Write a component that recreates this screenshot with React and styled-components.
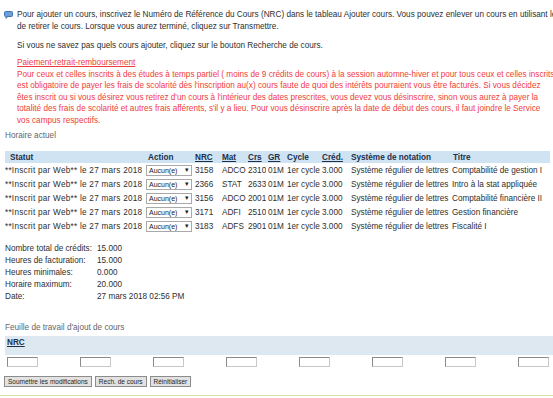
import React from "react";
import styled, { createGlobalStyle } from "styled-components";

const GlobalStyle = createGlobalStyle`
  body {
    margin: 0;
    background: #fff;
    overflow: hidden;
    font-family: "Liberation Sans", Tahoma, sans-serif;
    font-size: 8.2px;
    color: #2e2e2e;
  }
`;

const Page = styled.div`
  width: 760px;
  padding-top: 9px;
`;

const Intro = styled.div`
  display: flex;
  padding-left: 4px;
`;

const IconCol = styled.div`
  width: 13px;
  flex: none;
  padding-top: 2px;
`;

const Para = styled.div`
  line-height: 12px;
  white-space: nowrap;
  margin-top: ${p => p.mt || 0}px;
`;

const Notice = styled.div`
  color: #f03c3c;
  line-height: 11.5px;
  white-space: nowrap;
  padding-left: 17px;
  margin-top: 5px;
`;

const NoticeTitle = styled.div`
  text-decoration: underline;
`;

const Caption = styled.div`
  color: #666;
  padding-left: 5px;
  margin-top: ${p => p.mt || 0}px;
  line-height: 12px;
`;

const Table = styled.table`
  border-collapse: collapse;
  table-layout: fixed;
  width: 545px;
  margin-left: 5px;
  margin-top: 9px;
`;

const Th = styled.th`
  background: #cfe3f3;
  color: #1d2f4a;
  font-weight: bold;
  text-align: left;
  height: 12px;
  padding: 0 0 0 ${p => p.pl ?? 2}px;
  white-space: nowrap;
  text-decoration: ${p => (p.u ? "underline" : "none")};
`;

const Td = styled.td`
  height: 14px;
  padding: 0 0 0 ${p => p.pl ?? 2}px;
  white-space: nowrap;
  overflow: hidden;
  letter-spacing: ${p => p.ls || 0}px;
`;

const Select = styled.div`
  display: inline-flex;
  align-items: center;
  justify-content: space-between;
  width: 46px;
  height: 11px;
  box-sizing: border-box;
  border: 1px solid #a9a9a9;
  background: #fff;
  font-size: 7px;
  padding: 0 2px;
  color: #222;
`;

const Summary = styled.div`
  display: grid;
  grid-template-columns: 92px auto;
  line-height: 12px;
  padding-left: 5px;
  margin-top: 10px;
`;

const NrcBar = styled.div`
  background: #dde8f1;
  height: 19px;
  margin-left: 5px;
  margin-top: 2px;
  padding: 2px 0 0 2px;
  box-sizing: border-box;
  font-weight: bold;
  color: #1d2f4a;
  text-decoration: underline;
`;

const InputRow = styled.div`
  display: flex;
  gap: 42px;
  padding-left: 7px;
  margin-top: 2px;
`;

const Box = styled.div`
  width: 31px;
  height: 10px;
  box-sizing: border-box;
  border: 1px solid #8a8a8a;
  border-right-color: #c8c8c8;
  border-bottom-color: #c8c8c8;
  background: #fff;
`;

const ButtonRow = styled.div`
  display: flex;
  gap: 3px;
  padding-left: 4px;
  margin-top: 9px;
`;

const Button = styled.div`
  height: 11px;
  box-sizing: border-box;
  border: 1px solid #8c8c8c;
  background: #e2e2e2;
  font-size: 6.5px;
  color: #222;
  padding: 0 3px;
  display: flex;
  align-items: center;
  white-space: nowrap;
`;

const Rule = styled.div`
  height: 1px;
  background: #d3e2b0;
  margin-top: 8px;
`;

const InfoIcon = () => (
  <svg width="9" height="8" viewBox="0 0 9 8">
    <rect x="0.5" y="0.5" width="8" height="5" rx="1" fill="#6d9fd6" stroke="#3f74b4" />
    <path d="M2 5.5 L2 7.5 L4 5.5" fill="#6d9fd6" stroke="#3f74b4" strokeWidth="0.8" />
  </svg>
);

const rows = [
  ["3158", "ADCO", "2310", "Comptabilité de gestion I"],
  ["2366", "STAT", "2633", "Intro à la stat appliquée"],
  ["3156", "ADCO", "2001", "Comptabilité financière II"],
  ["3171", "ADFI", "2510", "Gestion financière"],
  ["3183", "ADFS", "2901", "Fiscalité I"],
];

const App = () => (
  <Page>
    <GlobalStyle />
    <Intro>
      <IconCol>
        <InfoIcon />
      </IconCol>
      <div>
        <Para>
          Pour ajouter un cours, inscrivez le Numéro de Référence du Cours (NRC) dans le tableau Ajouter cours. Vous pouvez enlever un cours en utilisant les options. Si vous désirez
          <br />
          de retirer le cours. Lorsque vous aurez terminé, cliquez sur Transmettre.
        </Para>
        <Para mt={7}>Si vous ne savez pas quels cours ajouter, cliquez sur le bouton Recherche de cours.</Para>
      </div>
    </Intro>

    <Notice>
      <NoticeTitle>Paiement-retrait-remboursement</NoticeTitle>
      Pour ceux et celles inscrits à des études à temps partiel ( moins de 9 crédits de cours) à la session automne-hiver et pour tous ceux et celles inscrits
      <br />
      est obligatoire de payer les frais de scolarité dès l'inscription au(x) cours faute de quoi des intérêts pourraient vous être facturés. Si vous décidez
      <br />
      êtes inscrit ou si vous désirez vous retirez d'un cours à l'intérieur des dates prescrites, vous devez vous désinscrire, sinon vous aurez à payer la
      <br />
      totalité des frais de scolarité et autres frais afférents, s'il y a lieu. Pour vous désinscrire après la date de début des cours, il faut joindre le Service
      <br />
      vos campus respectifs.
    </Notice>

    <Caption mt={4}>Horaire actuel</Caption>

    <Table>
      <colgroup>
        <col style={{ width: 140 }} />
        <col style={{ width: 48 }} />
        <col style={{ width: 27 }} />
        <col style={{ width: 26 }} />
        <col style={{ width: 20 }} />
        <col style={{ width: 19 }} />
        <col style={{ width: 35 }} />
        <col style={{ width: 29 }} />
        <col style={{ width: 102 }} />
        <col style={{ width: 99 }} />
      </colgroup>
      <thead>
        <tr>
          <Th pl={5}>Statut</Th>
          <Th pl={3}>Action</Th>
          <Th u>NRC</Th>
          <Th u>Mat</Th>
          <Th u>Crs</Th>
          <Th u>GR</Th>
          <Th>Cycle</Th>
          <Th u>Créd.</Th>
          <Th>Système de notation</Th>
          <Th>Titre</Th>
        </tr>
      </thead>
      <tbody>
        {rows.map(([nrc, mat, crs, titre]) => (
          <tr key={nrc}>
            <Td pl={0} ls={0.25}>**Inscrit par Web** le 27 mars 2018</Td>
            <Td pl={1}>
              <Select>
                <span>Aucun(e)</span>
                <span>▾</span>
              </Select>
            </Td>
            <Td>{nrc}</Td>
            <Td>{mat}</Td>
            <Td>{crs}</Td>
            <Td>01M</Td>
            <Td>1er cycle</Td>
            <Td>3.000</Td>
            <Td>Système régulier de lettres</Td>
            <Td pl={1}>{titre}</Td>
          </tr>
        ))}
      </tbody>
    </Table>

    <Summary>
      <span>Nombre total de crédits:</span>
      <span>15.000</span>
      <span>Heures de facturation:</span>
      <span>15.000</span>
      <span>Heures minimales:</span>
      <span>0.000</span>
      <span>Horaire maximum:</span>
      <span>20.000</span>
      <span>Date:</span>
      <span>27 mars 2018 02:56 PM</span>
    </Summary>

    <Caption mt={19}>Feuille de travail d'ajout de cours</Caption>

    <NrcBar>NRC</NrcBar>
    <InputRow>
      {Array.from({ length: 8 }).map((_, i) => (
        <Box key={i} />
      ))}
    </InputRow>

    <ButtonRow>
      <Button>Soumettre les modifications</Button>
      <Button>Rech. de cours</Button>
      <Button>Réinitialiser</Button>
    </ButtonRow>
    <Rule />
  </Page>
);

export default App;
